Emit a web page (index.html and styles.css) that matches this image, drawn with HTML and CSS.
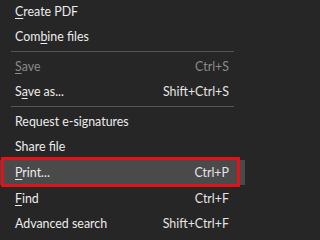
FILE: index.html
```html
<!DOCTYPE html>
<html>
<head>
<meta charset="utf-8">
<link rel="stylesheet" href="styles.css">
</head>
<body>
<div class="menu">
  <div class="item"><span class="label"><u>C</u>reate PDF</span></div>
  <div class="item"><span class="label">Com<u>b</u>ine files</span></div>
  <div class="sep"></div>
  <div class="item disabled"><span class="label"><u>S</u>ave</span><span class="key">Ctrl+S</span></div>
  <div class="item"><span class="label">S<u>a</u>ve as...</span><span class="key">Shift+Ctrl+S</span></div>
  <div class="sep"></div>
  <div class="item"><span class="label">Request e-signatures</span></div>
  <div class="item"><span class="label">Share file</span></div>
  <div class="item active"><span class="label"><u>P</u>rint...</span><span class="key">Ctrl+P</span></div>
  <div class="item"><span class="label"><u>F</u>ind</span><span class="key">Ctrl+F</span></div>
  <div class="item"><span class="label">Advanced search</span><span class="key">Shift+Ctrl+F</span></div>
</div>
</body>
</html>
```
FILE: styles.css
```css
html, body {
  margin: 0;
  padding: 0;
  background: #262626;
  overflow: hidden;
}
.menu {
  width: 245px;
  margin-top: -1.8px;
  font-family: Lato, "Open Sans", sans-serif;
  font-size: 12.4px;
  color: #ececec;
  display: flex;
  flex-direction: column;
}
.item {
  position: relative;
  height: 25.6px;
  display: flex;
  align-items: center;
  justify-content: space-between;
  padding: 0 16px 0 15px;
}
.item u {
  text-decoration-thickness: 1px;
  text-underline-offset: 2px;
}
.key {
  color: #e4e4e4;
}
.disabled .label,
.disabled .key {
  color: #8a8a8a;
}
.sep {
  height: 4px;
  display: flex;
  align-items: center;
  padding: 0 11px;
}
.sep::before {
  content: "";
  display: block;
  flex: 1;
  height: 1px;
  background: #555555;
}
.active {
  background: #4a4a4a;
}
.active::after {
  content: "";
  position: absolute;
  left: 1px;
  right: 5px;
  top: -3px;
  bottom: -2px;
  border: 3px solid #e0131a;
  border-radius: 1px;
}
```
